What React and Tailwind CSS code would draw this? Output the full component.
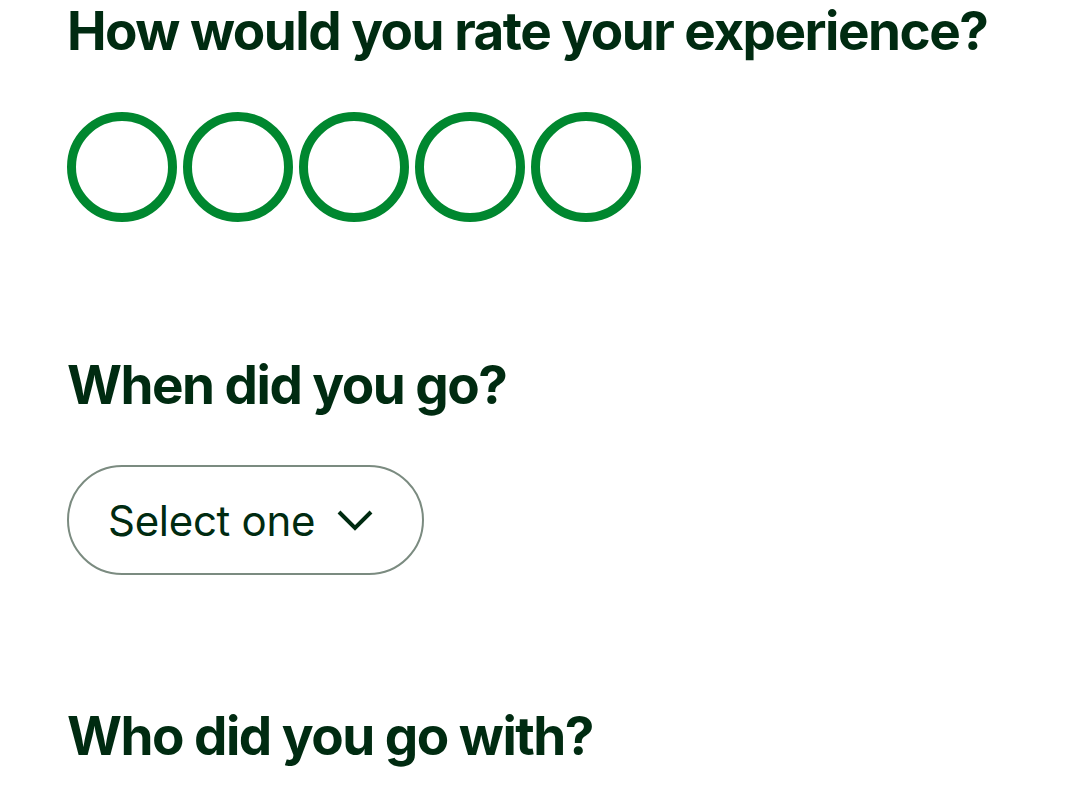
export default function App() {
  const font = { fontFamily: 'Inter, "Noto Sans", sans-serif' };
  return (
    <div className="min-h-[808px] w-[1080px] bg-white text-[#002b11]" style={font}>
      <div className="pl-[67px] pt-[5px]">
        <h2 className="text-[53px] leading-none font-bold tracking-[-1.5px]">
          How would you rate your experience?
        </h2>
        <div className="mt-[54px] flex gap-[6px]">
          {[0, 1, 2, 3, 4].map((i) => (
            <button
              key={i}
              className="h-[110px] w-[110px] rounded-full border-[9px] border-[#00872f]"
            />
          ))}
        </div>
        <h2 className="mt-[137px] text-[53px] leading-none font-bold tracking-[-1.5px]">
          When did you go?
        </h2>
        <button className="mt-[53px] flex h-[110px] w-[357px] items-center gap-[22px] rounded-full border-2 border-[#7b8b80] pl-[39px]">
          <span className="text-[42px] tracking-[-0.3px]">Select one</span>
          <svg width="36" height="22" viewBox="0 0 36 22" fill="none">
            <path d="M2 3l16 16L34 3" stroke="#002b11" strokeWidth="4" />
          </svg>
        </button>
        <h2 className="mt-[135px] text-[53px] leading-none font-bold tracking-[-1.5px]">
          Who did you go with?
        </h2>
      </div>
    </div>
  );
}
